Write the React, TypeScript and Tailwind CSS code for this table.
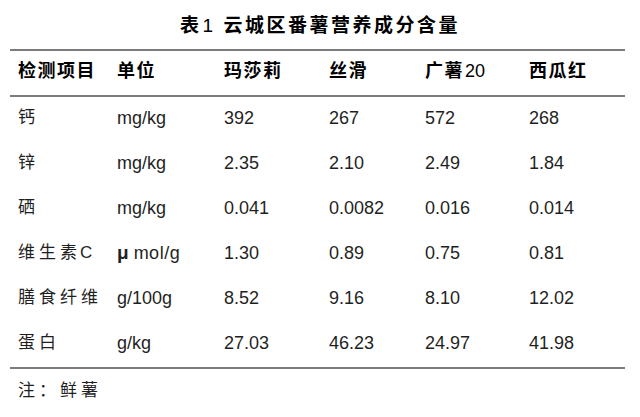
import React from "react";

const font = "font-['Liberation_Sans','Noto_Sans_CJK_SC',sans-serif]";
const cols = "grid grid-cols-[99px_107px_105px_96px_104px_1fr] pl-[8px]";

const rows: { name: React.ReactNode; unit: React.ReactNode; v: string[] }[] = [
  { name: "钙", unit: "mg/kg", v: ["392", "267", "572", "268"] },
  { name: "锌", unit: "mg/kg", v: ["2.35", "2.10", "2.49", "1.84"] },
  { name: "硒", unit: "mg/kg", v: ["0.041", "0.0082", "0.016", "0.014"] },
  {
    name: (
      <span>
        维生素<span className="tracking-normal ml-[-1px]">C</span>
      </span>
    ),
    unit: (
      <span>
        <span className="font-bold text-[19px] mr-[5px]">μ</span>
        <span className="tracking-[0.5px]">mol/g</span>
      </span>
    ),
    v: ["1.30", "0.89", "0.75", "0.81"],
  },
  { name: "膳食纤维", unit: "g/100g", v: ["8.52", "9.16", "8.10", "12.02"] },
  { name: "蛋白", unit: "g/kg", v: ["27.03", "46.23", "24.97", "41.98"] },
];

export default function App() {
  return (
    <div className={`w-[640px] h-[417px] bg-white text-[#1f1f1f] ${font}`}>
      {/* 标题 */}
      <div className="h-[49px] pt-[4px] flex items-center justify-center text-[19px] font-bold tracking-[2.5px] text-black">
        表<span className="font-normal ml-[1px]">1</span>&nbsp;云城区番薯营养成分含量
      </div>

      <div className="ml-[10px] mr-[15px]">
        <div className="h-[2px] bg-[#7c7c7c]" />
        {/* 表头 */}
        <div className={`${cols} h-[44px] pb-[4px] items-center text-[18px] font-bold tracking-[1.5px] text-black`}>
          <div>检测项目</div>
          <div>单位</div>
          <div>玛莎莉</div>
          <div>丝滑</div>
          <div>
            广薯<span className="font-normal tracking-normal text-[18px] ml-[1px]">20</span>
          </div>
          <div>西瓜红</div>
        </div>
        <div className="h-[2px] bg-[#7c7c7c]" />

        {rows.map((r, i) => (
          <div key={i} className={`${cols} h-[45px] pb-[3px] items-center text-[18px]`}>
            <div className="text-[17px] tracking-[4px]">{r.name}</div>
            <div>{r.unit}</div>
            {r.v.map((x, j) => (
              <div key={j}>{x}</div>
            ))}
          </div>
        ))}
        <div className="h-[2px] bg-[#7c7c7c]" />

        <div className="h-[40px] pt-[4px] pl-[8px] flex items-center text-[17px] tracking-[4px]">注：鲜薯</div>
      </div>
    </div>
  );
}
